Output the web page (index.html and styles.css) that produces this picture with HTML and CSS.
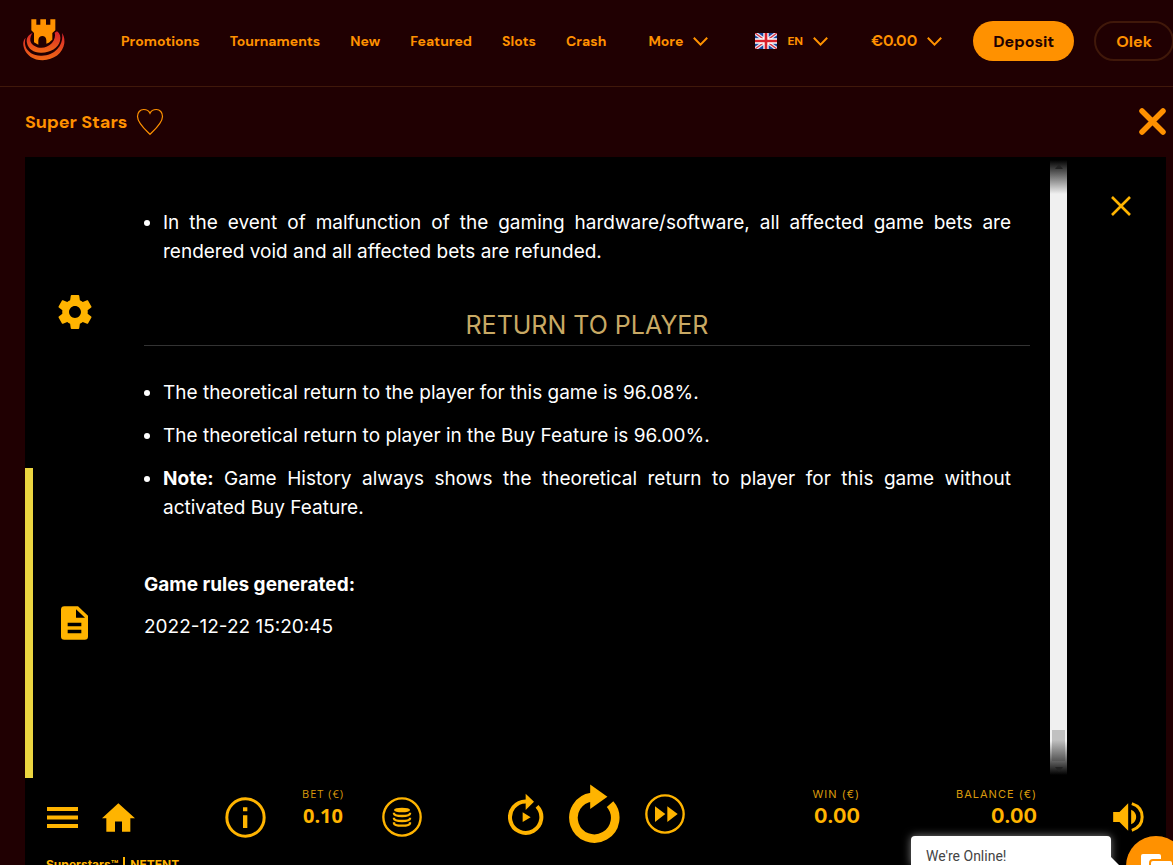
FILE: index.html
```html
<!DOCTYPE html>
<html lang="en">
<head>
<meta charset="utf-8">
<meta name="viewport" content="width=device-width, initial-scale=1">
<title>Super Stars</title>
<link rel="stylesheet" href="styles.css">
</head>
<body>
<header class="site-header">
  <a class="logo" href="#" aria-label="Home">
    <svg viewBox="68 56 126 126" width="42" height="42">
      <defs><linearGradient id="ring" x1="0" y1="0" x2="0" y2="1"><stop offset="0" stop-color="#d8202c"/><stop offset="1" stop-color="#f06a14"/></linearGradient></defs>
      <path fill="url(#ring)" d="M97 98C83 103 77 115 80 128C84 147 101 158 124 157C150 157 174 143 179 122C182 110 179 99 170 93L163 97C166 105 163 119 155 128C145 139 130 144 118 142C103 140 92 131 90 121C89 112 92 104 97 98Z"/>
      <path fill="url(#ring)" d="M76 112C68 120 67 132 71 143C78 165 99 180 127 180C160 179 188 159 192 129C193 117 191 106 185 98C188 114 184 132 171 146C158 160 140 167 121 166C99 165 82 155 76 139C73 130 73 121 76 112Z"/>
      <path fill="#ff9100" d="M93 57H108V73H120V57H137V73H150V57H165V90L156 98V118L151 122C148 126 143 129 138 130V120C138 103 114 103 114 120V133L101 126V98L93 90Z"/>
    </svg>
  </a>
  <nav class="main-nav">
    <a href="#">Promotions</a>
    <a href="#">Tournaments</a>
    <a href="#">New</a>
    <a href="#">Featured</a>
    <a href="#">Slots</a>
    <a href="#">Crash</a>
  </nav>
  <button class="menu more" type="button">More <svg class="chevron" viewBox="0 0 15 9"><path d="M.8.8 7.500 7.600 14.200.8"/></svg></button>
  <button class="menu lang" type="button">
    <svg class="flag" viewBox="0 0 66 48">
      <path fill="#17479e" d="M0 0H66V48H0Z"/>
      <path stroke="#e8e8f4" stroke-width="11" d="M0 0 66 48M66 0 0 48"/>
      <path stroke="#d8313f" stroke-width="4" d="M0 0 66 48M66 0 0 48"/>
      <path stroke="#fff" stroke-width="16" d="M33 0V48M0 24H66"/>
      <path stroke="#d8202c" stroke-width="8" d="M33 0V48M0 24H66"/>
    </svg>
    EN <svg class="chevron" viewBox="0 0 15 9"><path d="M.8.8 7.500 7.600 14.200.8"/></svg></button>
  <button class="menu wallet" type="button">€0.00 <svg class="chevron" viewBox="0 0 15 9"><path d="M.8.8 7.500 7.600 14.200.8"/></svg></button>
  <button class="pill deposit" type="button">Deposit</button>
  <button class="pill user" type="button">Olek</button>
</header>

<section class="title-bar">
  <h1>Super Stars</h1>
  <button class="icon-btn" type="button" aria-label="Favourite">
    <svg width="28" height="28" viewBox="0 0 28 28" fill="none" stroke="#ff9100" stroke-width="1.200"><path d="M14 26.300C9 21.500 1.500 15 1.500 8.500C1.500 4.500 4 1.500 7.600 1.500C10.500 1.500 13 3 14 5.300C15 3 17.500 1.500 20.400 1.500C24 1.500 26.500 4.500 26.500 8.500C26.500 15 19 21.500 14 26.300Z"/></svg>
  </button>
  <button class="icon-btn close-page" type="button" aria-label="Close game">
    <svg width="27" height="27" viewBox="0 0 27 27" stroke="#ff9100" stroke-width="5.500" stroke-linecap="round"><path d="M3 3 24 24M24 3 3 24"/></svg>
  </button>
</section>

<main class="game">
  <div class="rules">
    <div class="tabs">
      <button class="tab" type="button" aria-label="Settings">
        <svg width="34" height="34" viewBox="2 2 20 20" fill="#ffb400"><path d="M19.43 12.98c.04-.32.07-.64.07-.98s-.03-.66-.07-.98l2.110-1.650c.19-.15.24-.42.12-.64l-2-3.460c-.12-.22-.39-.3-.61-.22l-2.490 1c-.52-.4-1.080-.73-1.690-.98l-.38-2.650C14.460 2.180 14.250 2 14 2h-4c-.25 0-.46.18-.49.42l-.38 2.650c-.61.25-1.170.59-1.690.98l-2.490-1c-.23-.09-.49 0-.61.22l-2 3.460c-.13.22-.07.49.12.64l2.110 1.650c-.04.32-.07.65-.07.98s.03.66.07.98l-2.110 1.650c-.19.15-.24.42-.12.64l2 3.460c.12.22.39.3.61.22l2.490-1c.52.4 1.080.73 1.690.98l.38 2.650c.03.24.24.42.49.42h4c.25 0 .46-.18.49-.42l.38-2.650c.61-.25 1.170-.59 1.690-.98l2.490 1c.23.09.49 0 .61-.22l2-3.460c.12-.22.07-.49-.12-.64l-2.110-1.650zM12 15.500c-1.930 0-3.500-1.570-3.500-3.500s1.570-3.500 3.500-3.500 3.500 1.570 3.500 3.500-1.570 3.500-3.500 3.500z"/></svg>
      </button>
      <button class="tab active" type="button" aria-label="Game rules">
        <svg width="27" height="34" viewBox="0 0 81 101"><path fill="#ffb400" fill-rule="evenodd" d="M10 0H51L81 29V91Q81 101 71 101H10Q0 101 0 91V10Q0 0 10 0ZM45 9V35H72ZM20 50V60H61V50ZM20 71V81H61V71Z"/></svg>
      </button>
    </div>
    <article class="rules-text">
      <ul class="first">
        <li>In the event of malfunction of the gaming hardware/software, all affected game bets are rendered void and all affected bets are refunded.</li>
      </ul>
      <h2>RETURN TO PLAYER</h2>
      <ul>
        <li>The theoretical return to the player for this game is 96.08%.</li>
        <li>The theoretical return to player in the Buy Feature is 96.00%.</li>
        <li><b>Note:</b> Game History always shows the theoretical return to player for this game without activated Buy Feature.</li>
      </ul>
      <p class="generated"><b>Game rules generated:</b></p>
      <p>2022-12-22 15:20:45</p>
    </article>
    <div class="scrollbar">
      <svg width="8" height="5" viewBox="0 0 8 5"><path d="M0 5 4 0 8 5Z"/></svg>
      <div class="thumb"></div>
      <svg width="8" height="5" viewBox="0 0 8 5"><path d="M0 0 4 5 8 0Z"/></svg>
    </div>
    <div class="rules-side">
      <button class="icon-btn" type="button" aria-label="Close rules">
        <svg width="20" height="20" viewBox="0 0 20 20" stroke="#ffb400" stroke-width="2.600"><path d="M1 1 19 19M19 1 1 19"/></svg>
      </button>
    </div>
  </div>

  <div class="controls">
    <div class="group left">
      <button class="icon-btn" type="button" aria-label="Menu"><svg width="31" height="21" viewBox="0 0 31 21" fill="#ffb400"><path d="M0 0H31V4H0ZM0 8.500H31V12.500H0ZM0 17H31V21H0Z"/></svg></button>
      <button class="icon-btn" type="button" aria-label="Home"><svg width="33" height="29" viewBox="0 0 99 86" fill="#ffb400"><path d="M49 0 99 45H85V86H60V55H39V86H13V45H0Z"/></svg></button>
    </div>
    <button class="icon-btn" type="button" aria-label="Information"><svg width="41" height="41" viewBox="0 0 123 123"><circle cx="61.500" cy="61.500" r="56" fill="none" stroke="#ffb400" stroke-width="9"/><path fill="#ffb400" d="M54 31H67V43H54ZM54 55H67V93H54Z"/></svg></button>
    <div class="stat bet"><span>BET (€)</span><b>0.10</b></div>
    <button class="icon-btn coins" type="button" aria-label="Bet level"><svg width="40" height="40" viewBox="0 0 120 120"><circle cx="60" cy="60" r="56" fill="none" stroke="#ffb400" stroke-width="7"/><ellipse cx="60" cy="39" rx="24" ry="7" fill="#ffb400"/><g fill="none" stroke="#ffb400" stroke-width="7"><path d="M36 47V50Q37 57 60 57T84 50V47M36 62V65Q37 72 60 72T84 65V62M36 76V79Q37 86 60 86T84 79V76"/></g></svg></button>
    <div class="group spin">
      <button class="icon-btn" type="button" aria-label="Autoplay"><svg width="36" height="42" viewBox="355 76 108 126"><path fill="none" stroke="#ffb400" stroke-width="12" d="M409 101.500A47 47 0 1 0 442 116"/><path fill="#ffb400" d="M408 78 433 102 408 127ZM399 134 423 149 399 163Z"/></svg></button>
      <button class="icon-btn" type="button" aria-label="Spin"><svg width="51" height="60" viewBox="540 57 154 180"><path fill="none" stroke="#ffb400" stroke-width="26" d="M608 96A63 63 0 1 0 664 117"/><path fill="#ffb400" d="M604 58 656 95 604 132Z"/></svg></button>
      <button class="icon-btn" type="button" aria-label="Quick spin"><svg width="40" height="40" viewBox="0 0 120 120"><circle cx="60" cy="60" r="56" fill="none" stroke="#ffb400" stroke-width="7"/><path fill="#ffb400" d="M30 37 61 60 30 84ZM67 37 98 60 67 84Z"/></svg></button>
    </div>
    <div class="stat win"><span>WIN (€)</span><b>0.00</b></div>
    <div class="stat balance"><span>BALANCE (€)</span><b>0.00</b></div>
    <button class="icon-btn sound" type="button" aria-label="Sound"><svg width="31" height="30" viewBox="999 112 92 90"><path fill="#ffb400" d="M999 142H1018L1044 116V198L1018 172H999ZM1053 135Q1068 142 1068 157T1053 179Z"/><path fill="none" stroke="#ffb400" stroke-width="9" d="M1055 117Q1086 127 1086 157T1055 197"/></svg></button>
  </div>
  <footer class="game-name">Superstars™ <i></i> NETENT</footer>
</main>

<aside class="chat">
  <div class="chat-tip">We're Online!</div>
  <svg class="chat-tail" width="8" height="8" viewBox="0 0 8 8"><path fill="#fff" d="M0 0 8 8H0Z"/></svg>
  <button class="chat-btn" type="button" aria-label="Open chat">
    <svg width="34" height="30" viewBox="0 0 34 30"><rect x="1" y="0" width="20" height="24" rx="2" fill="#fff"/><rect x="10" y="6" width="23" height="20" rx="3" fill="#fff" stroke="#ff9100" stroke-width="2"/></svg>
  </button>
</aside>
</body>
</html>
```

FILE: styles.css
```css
* { box-sizing: border-box; }
body {
  margin: 0;
  height: 100vh;
  overflow: hidden;
  display: flex;
  flex-direction: column;
  background: #200002;
  color: #ff9100;
  font-family: "DM Sans", Inter, "Open Sans", sans-serif;
}
button { font: inherit; color: inherit; background: none; border: 0; padding: 0; cursor: pointer; }
svg { display: block; flex: none; }
a { color: inherit; text-decoration: none; }

.site-header {
  flex: none;
  height: 87px;
  padding: 0 0 4px 23px;
  display: flex;
  align-items: center;
  border-bottom: 1px solid #40180a;
  font-size: 14px;
  font-weight: 700;
  white-space: nowrap;
}
.site-header > * { flex: none; }
.logo { margin: 0 56px 3px 0; }
.main-nav { display: flex; gap: 30px; }
.menu { display: flex; align-items: center; gap: 10px; font-weight: 700; }
.chevron { width: 15px; height: 9px; fill: none; stroke: currentColor; stroke-width: 2; }
.more { margin-left: 42px; }
.lang { margin-left: 47px; font-size: 12px; }
.flag { width: 22px; height: 16px; }
.wallet { margin-left: 43px; font-size: 15px; }
.pill { height: 40px; padding: 0 20px; border-radius: 20px; font-size: 16px; font-weight: 700; }
.deposit { margin-left: 31px; background: #ff9100; color: #200002; }
.user { margin-left: 20px; border: 2px solid #40180a; }

.title-bar {
  flex: none;
  height: 70px;
  padding: 0 7px 1px 25px;
  display: flex;
  align-items: center;
  gap: 9px;
}
.title-bar h1 { margin: 0; font-size: 18px; font-weight: 700; }
.close-page { margin-left: auto; }

.game {
  flex: 1;
  min-height: 0;
  margin: 0 7px 0 25px;
  display: flex;
  flex-direction: column;
  overflow: hidden;
  background: #000;
  color: #ffb400;
  font-family: Inter, sans-serif;
}
.rules { flex: 1; min-height: 0; display: grid; grid-template-columns: 119px 1fr 17px 99px; }
.tabs { display: grid; grid-template-rows: 1fr 1fr; }
.tab { display: flex; align-items: center; justify-content: center; padding-right: 19px; }
.tab.active { border-left: 8px solid #ecd540; padding-right: 28px; }
.rules-text {
  padding: 51px 20px 0 0;
  overflow: hidden;
  color: #fff;
  font-size: 19px;
  line-height: 29px;
}
.rules-text ul { margin: 0; padding: 0 19px; text-align: justify; }
.rules-text li + li { margin-top: 14px; }
.rules-text h2 {
  margin: 44px 0 32px;
  padding-bottom: 4px;
  border-bottom: 1px solid #333;
  color: #c8a964;
  font-size: 25px;
  font-weight: 400;
  line-height: 31px;
  text-align: center;
}
.rules-text p { margin: 13px 0 0; }
.rules-text .generated { margin-top: 48px; }
.scrollbar {
  margin: 3px 0;
  padding: 4px 0 3px;
  display: flex;
  flex-direction: column;
  align-items: center;
  background: linear-gradient(#000, #f0f0f0 34px, #f0f0f0 calc(100% - 34px), #000);
  fill: #222;
}
.thumb { width: 13px; height: 31px; margin: auto 0 6px; background: linear-gradient(#c1c1c1 10px, #555); }
.rules-side { padding: 39px 0 0 9px; display: flex; align-items: flex-start; justify-content: center; }

.controls { flex: none; height: 76px; padding: 2px 22px 0; display: flex; align-items: center; }
.controls > * { flex: none; }
.group { display: flex; align-items: center; }
.left { gap: 24px; margin-right: 90px; }
.stat { display: flex; flex-direction: column; gap: 4px; height: 60px; align-items: flex-end; }
.stat span { font-size: 11px; line-height: 14px; letter-spacing: 1px; color: #d99a0c; }
.stat b { font-size: 20px; line-height: 22px; font-weight: 700; }
.bet { align-items: center; width: 60px; margin: 0 29px 0 27px; font-family: "Open Sans", sans-serif; }
.spin { gap: 25px; margin: 0 auto 6px 86px; }
.balance { margin: 0 76px 0 96px; }
.game-name {
  flex: none;
  height: 11px;
  padding: 3px 21px 0;
  display: flex;
  gap: 5px;
  overflow: hidden;
  font-size: 12px;
  line-height: 15px;
  font-weight: 700;
}
.game-name i { width: 2px; height: 14px; background: #ffb400; }

.chat { position: absolute; right: 0; bottom: 0; width: 262px; height: 29px; display: flex; color: #444; }
.chat-tip {
  flex: none;
  width: 200px;
  padding: 11px 15px 0;
  border-radius: 4px 4px 0 0;
  background: #fff;
  box-shadow: 0 0 8px #ffffff80;
  font-family: "Open Sans", sans-serif;
  font-size: 14px;
  line-height: 18px;
  font-family: Roboto, sans-serif;
}
.chat-tail { align-self: flex-end; margin-right: 7px; }
.chat-btn {
  flex: none;
  width: 60px;
  height: 60px;
  display: flex;
  padding: 18px 0 0 14px;
  border-radius: 50%;
  background: #ff9100;
}
```
